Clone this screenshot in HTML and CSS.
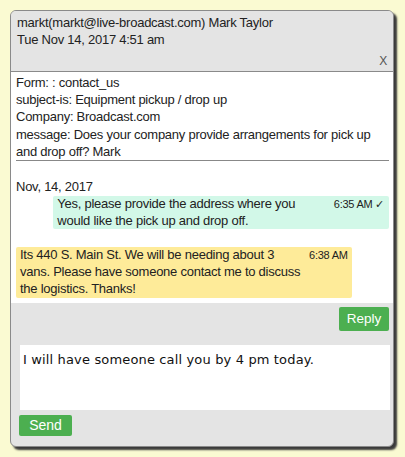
FILE: index.html
```html
<!DOCTYPE html>
<html>
<head>
<meta charset="utf-8">
<link rel="stylesheet" href="styles.css">
</head>
<body>
<div class="card">
  <div class="head">
    <div class="head-line">markt(markt@live-broadcast.com) Mark Taylor</div>
    <div class="head-line">Tue Nov 14, 2017 4:51 am</div>
    <div class="close">X</div>
  </div>
  <div class="content">
    <div class="form">
      <div>Form: : contact_us</div>
      <div>subject-is: Equipment pickup / drop up</div>
      <div>Company: Broadcast.com</div>
      <div>message: Does your company provide arrangements for pick up and drop off? Mark</div>
    </div>
    <div class="rule"></div>
    <div class="day">Nov, 14, 2017</div>
    <div class="bubble out">
      <div class="msg">Yes, please provide the address where you would like the pick up and drop off.</div>
      <div class="time">6:35 AM ✓</div>
    </div>
    <div class="bubble in">
      <div class="msg">Its 440 S. Main St. We will be needing about 3 vans. Please have someone contact me to discuss the logistics. Thanks!</div>
      <div class="time">6:38 AM</div>
    </div>
  </div>
  <div class="foot">
    <div class="reply-row"><button class="btn reply">Reply</button></div>
    <textarea class="input">I will have someone call you by 4 pm today.</textarea>
    <div class="send-row"><button class="btn send">Send</button></div>
  </div>
</div>
</body>
</html>
```
FILE: styles.css
```css
html, body {
  margin: 0;
  background: #fafad2;
}
body {
  padding: 10px;
  font-family: "Liberation Sans", Arial, sans-serif;
  font-size: 13px;
  letter-spacing: -0.25px;
  color: #222;
}
.card {
  width: 384px;
  box-sizing: border-box;
  border: 1px solid #8a8a8a;
  border-radius: 6px;
  box-shadow: 3px 3px 2px #3a3a3a;
  overflow: hidden;
  background: #e4e4e4;
}
.head {
  height: 61px;
  box-sizing: border-box;
  padding: 3px 6px 3px 6px;
  border-bottom: 1px solid #8a8a8a;
  display: flex;
  flex-direction: column;
  background: #e4e4e4;
}
.head-line {
  line-height: 17.2px;
}
.close {
  margin-top: auto;
  text-align: right;
  font-size: 12px;
  line-height: 14px;
  color: #555;
}
.content {
  background: #fff;
  padding: 2px 4px 5px 5px;
}
.form {
  line-height: 17.2px;
}
.rule {
  border-top: 1px solid #888;
}
.day {
  margin-top: 16.5px;
  line-height: 17.2px;
}
.bubble {
  width: 90%;
  box-sizing: border-box;
  display: flex;
  border-radius: 2px;
  line-height: 16.6px;
}
.bubble .msg {
  flex: 1;
}
.bubble .time {
  font-size: 11px;
  white-space: nowrap;
  margin-left: 2px;
}
.out {
  margin-top: 1.3px;
  margin-left: auto;
  background: #d2f8e8;
  padding: 0 5px 0 4px;
}
.out .time {
  margin-left: 12px;
}
.in {
  margin-top: 18px;
  background: #feeb99;
  padding: 0 4px 0 4px;
  line-height: 16.9px;
}
.foot {
  padding: 4px 4px 10px 8px;
}
.reply-row {
  display: flex;
  justify-content: flex-end;
}
.btn {
  border: none;
  border-radius: 2px;
  background: #4caf50;
  color: #fff;
  font-family: "Liberation Sans", Arial, sans-serif;
  margin: 0;
}
.reply {
  height: 24px;
  width: 50px;
  padding: 0;
  font-size: 13.5px;
}
.input {
  display: block;
  margin: 14px 0 0 1px;
  width: 370px;
  height: 65px;
  box-sizing: border-box;
  border: none;
  padding: 7px 3px;
  resize: none;
  font-family: "DejaVu Sans", Verdana, sans-serif;
  font-size: 13px;
  letter-spacing: 0.15px;
  color: #111;
  background: #fff;
  outline: none;
}
.send-row {
  margin-top: 5px;
  display: flex;
}
.send {
  height: 21px;
  width: 53px;
  padding: 0;
  font-size: 14px;
}
```
